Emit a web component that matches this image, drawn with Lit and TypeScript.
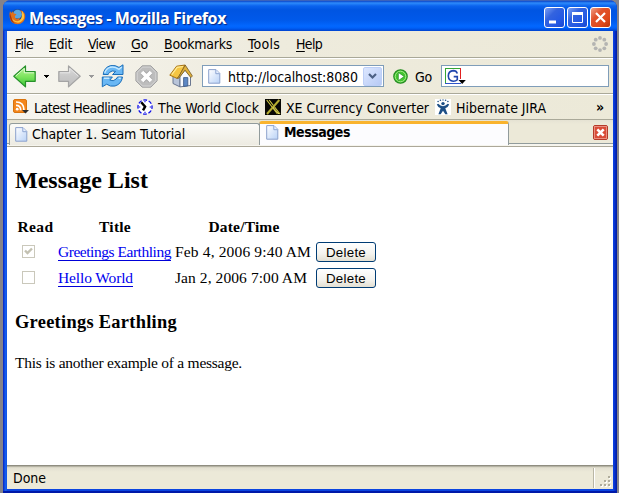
import { LitElement, html, css, svg } from "lit";
import { customElement, property } from "lit/decorators.js";

/** A run of text that is tracked to occupy a given width. */
@customElement("ui-label")
class UiLabel extends LitElement {
  @property() text = "";
  @property({ type: Number }) w = 0;
  @property({ type: Boolean }) mnemonic = false;
  static styles = css`
    :host { display: block; white-space: pre; flex: none; }
    .run { display: inline-block; }
    .key { text-decoration: underline; text-underline-offset: 2px; text-decoration-thickness: 1px; text-decoration-skip-ink: none; }
  `;
  updated() {
    const run = this.renderRoot.querySelector(".run") as HTMLElement;
    run.style.letterSpacing = "0px";
    const natural = run.getBoundingClientRect().width;
    run.style.letterSpacing = (this.w - natural) / this.text.length + "px";
  }
  render() {
    return this.mnemonic
      ? html`<span class="run"><span class="key">${this.text[0]}</span>${this.text.slice(1)}</span>`
      : html`<span class="run">${this.text}</span>`;
  }
}

const label = (text: string, w: number) => html`<ui-label .text=${text} .w=${w}></ui-label>`;

const firefox = html`<svg width="17" height="17" viewBox="0 0 17 17">
  <circle cx="8.5" cy="8.3" r="7.2" fill="#1c4c9c"/><circle cx="8.5" cy="6.2" r="4.4" fill="#5aa6e0"/>
  <path d="M1 3 2.2 5 4 3.2 4.5 5.3 7.5 6.2 6 8 5.8 9.6 8 11 11 9.7 10 12 Q14 11 12.7 5 L11.2 2 Q17 4 16.2 9.5 15 16 8.5 16.3 2 16 .8 10 0 6 1 3Z" fill="#e0701a"/>
  <path d="M13 3Q16 6 14.7 11 12 15 8 14.6 4 14 3 10 4.7 13 8.5 13.2 14 12.5 13 3Z" fill="#ffc43c"/>
  <path d="M1 5Q-.5 13 6 15.6 3 13 2.2 9Z" fill="#a8360f"/></svg>`;

const arrow = (dir: "back" | "fwd") => {
  const on = dir === "back";
  const flip = on ? "" : "translate(23 0) scale(-1 1)";
  return html`<svg width="23" height="23" viewBox="0 0 23 23">
    <defs><linearGradient id=${"shade-" + dir} x2="0" y2="1"><stop stop-color=${on ? "#b9f29b" : "#dcdcdc"}/><stop offset=".5" stop-color=${on ? "#7fe55f" : "#c9c9c9"}/><stop offset="1" stop-color=${on ? "#38c435" : "#bebebe"}/></linearGradient></defs>
    <path transform=${flip} d="M.8 11.3 12.5 1v5.6h9.7v9.7h-9.7v5.6Z" fill=${`url(#shade-${dir})`} stroke=${on ? "#26912a" : "#a4a4a4"} stroke-width="1.2" stroke-linejoin="round"/>
    <path transform=${flip} d="M2.7 11 11.3 3.4v4.4H21" fill="none" stroke=${on ? "#dcfbcc" : "#e8e8e8"} stroke-width="1"/></svg>`;
};
const tri = (c: string) => html`<svg width="5" height="3" viewBox="0 0 5 3" shape-rendering="crispEdges"><path d="M0 0h5v1h-1v1h-1v1h-1v-1h-1v-1h-1z" fill=${c}/></svg>`;

const reload = html`<svg width="24" height="24" viewBox="0 0 24 24">
  <g fill="#69b7f4" stroke="#1c6fb9" stroke-linejoin="round">
  <path d="M2.2 10.5Q3 3.5 9.5 1.6 14.5 .8 18 3.4L22 .8V10.5H11.5L14.6 7.4Q11 6 8.5 8.4 7.4 9.4 7.2 10.5Z"/>
  <path d="M21.5 13Q20.5 20 14 22 9 23 5.7 20.2L1.3 22.8V13H11.4L8.8 16.1Q12.5 17.8 15 15.1 16.2 14 16.5 13Z"/></g>
  <path d="M3.8 9Q5 4.5 9.7 3.2 14 2.4 18 5.4L20.8 3M3 14.3H8.3M17.5 14.3H19.8" fill="none" stroke="#c4e8ff" stroke-width="1.4"/></svg>`;

const stop = html`<svg width="23" height="23" viewBox="0 0 23 23"><path d="M7.2.8h8.6l6.3 6.3v8.8l-6.3 6.3H7.2L.9 15.9V7.1Z" fill="#bdbdbd" stroke="#a2a2a2"/><path d="M7.6 2.1h7.8l5.4 5.4v8L15.4 21H7.6l-5.4-5.5v-8Z" fill="none" stroke="#d4d4d4"/><path d="m7.2 7.2 8.6 8.6m0-8.6-8.6 8.6" stroke="#a9a9a9" stroke-width="5.4"/><path d="m7 7 9 9m0-9-9 9" stroke="#fff" stroke-width="3.7"/></svg>`;

const home = html`<svg width="24" height="24" viewBox="0 0 24 24">
  <path d="M4 11v8.5l7 3.4V11Z" fill="#b9c5d9" stroke="#6b7891"/>
  <path d="M11 12.5 16 6l5.5 6.5v9L11 22.9Z" fill="#f7f9fd" stroke="#6b7891"/>
  <path d="M14.6 13.6h4.2v8.3l-4.2.5Z" fill="#5d88c4" stroke="#375684" stroke-width=".8"/>
  <path d="M.8 11.2 7.6 2.2 16.2 1 10 12.2 8.2 14.4Z" fill="#f5c542" stroke="#a87516" stroke-linejoin="round"/>
  <path d="M2.8 10.6 8.2 3.4 14 2.5" stroke="#ffea94" fill="none" stroke-width="1.2"/>
  <path d="M16.2 1 23.4 12l-1.6 1.6L16 6.2l-6.2 8-1.6.2 1.8-2.2Z" fill="#dfb03a" stroke="#755b28" stroke-width=".8" stroke-linejoin="round"/></svg>`;

const page = html`<svg width="13" height="15" viewBox="0 0 13 15"><defs><linearGradient id="p" x2="1" y2="1"><stop stop-color="#fff"/><stop offset="1" stop-color="#b9d2f7"/></linearGradient></defs>
  <path d="M.7.6H8l3.8 3.8v9.8H.7Z" fill="url(#p)" stroke="#8ba1cc"/><path d="M7.8.8v3.9h3.9" fill="#e7f0ff" stroke="#8da5d2"/></svg>`;

const go = html`<svg width="15" height="15" viewBox="0 0 15 15"><circle cx="7.5" cy="7.5" r="6.7" fill="#43c52f" stroke="#258d22" stroke-width="1.2"/><circle cx="7.5" cy="7.5" r="5.3" fill="none" stroke="#a5ec8a"/><path d="M5.3 3.4 11.2 7.5l-5.9 4.2Z" fill="#fff" stroke="#1d8b1e" stroke-width=".7"/></svg>`;

const rss = html`<svg width="16" height="16" viewBox="0 0 16 16"><rect x=".5" y=".5" width="13" height="13" rx="1.5" fill="#f4861c" stroke="#d8740f"/><g fill="none" stroke="#fff" stroke-width="1.7"><path d="M3 3q8 0 8 8.3M3 6.4q4.7 0 4.7 4.9"/></g><circle cx="4.2" cy="10.2" r="1.4" fill="#fff"/><path d="M9 11h7l-3.5 3.6z" fill="#2b2b2b"/></svg>`;

const clock = html`<svg width="16" height="16" viewBox="0 0 17 17"><circle cx="8.5" cy="8.5" r="7.5" fill="#fff" stroke="#1010e8" stroke-width="1.4" stroke-dasharray="4 1.89" stroke-dashoffset="2"/><g stroke="#1010e8" stroke-width="1.2"><path d="M8.5 2v1.5M8.5 13.5v1.5M2 8.5h1.5M13.5 8.5h1.5"/></g><path d="M4.5 3.5 8.6 8.2 6.4 12" fill="none" stroke="#000" stroke-width="2.6"/></svg>`;

const xe = html`<svg width="16" height="16" viewBox="0 0 16 16"><rect width="16" height="16" fill="#080805"/><path d="M1.7 1 12.5 15M4.2 1 15 15" stroke="#d6cd42" stroke-width="1.1"/><path d="M14.3 1 2 15" stroke="#b6ad30" stroke-width="2"/><path d="m8 8.3 6 6.7" stroke="#f1ea6c"/></svg>`;

const jira = html`<svg width="16" height="16" viewBox="0 0 16 16"><rect width="16" height="16" fill="#fff"/><g fill="#1d4f86"><circle cx="8" cy="4.6" r="1.7"/><path d="M1.8 5.4 3.2 4.8Q5.5 7.2 8 7.2t4.8-2.4l1.4.6q-1 2.7-3.9 3.9l2.3 5.9h-2.3L8 11.8 5.7 15.2H3.4l2.3-5.9Q2.8 8.1 1.8 5.4Z"/><circle cx="3.1" cy="2.5" r=".8"/><circle cx="5.4" cy="1.2" r=".8"/><circle cx="8" cy=".9" r=".7"/><circle cx="10.6" cy="1.2" r=".8"/><circle cx="12.9" cy="2.5" r=".8"/></g></svg>`;

const throbber = html`<svg width="16" height="16" viewBox="0 0 16 16"><g fill="#b4b4b2">${[0, 45, 90, 135, 180, 225, 270, 315].map(
  (a) => svg`<circle cx=${8 + 6.1 * Math.cos((a * Math.PI) / 180)} cy=${8 + 6.1 * Math.sin((a * Math.PI) / 180)} r="1.9"/>`
)}</g></svg>`;

const search = html`<svg width="21" height="17" viewBox="0 0 21 17"><rect x=".5" y=".5" width="15" height="15" fill="#fff"/><path d="M0 .5h15" stroke="#35a635"/><path d="M.5 0v16" stroke="#35a635"/><path d="M0 15.5h16" stroke="#2e55c8"/><path d="M15.5 0v11" stroke="#e02020"/><path d="M12.3 5.4Q11.4 2.6 8.3 2.6 3.4 2.9 3.3 8q.3 5 5 5.2 2.5 0 4-1.5V8.6H8.7" fill="none" stroke="#2146ad" stroke-width="1.6"/><path d="M13.5 12h7.3l-3.6 4z" fill="#000"/></svg>`;

@customElement("app-root")
class AppRoot extends LitElement {
  static styles = css`
    :host { display: block; width: 619px; height: 493px; background: #85838a; overflow: hidden; font: 14px/18px "DejaVu Sans Condensed", "Noto Sans", sans-serif; color: #000; }
    * { box-sizing: border-box; }
    svg { display: block; flex: none; }
    .window { margin-left: 3px; width: 614px; height: 493px; padding: 0 4px 4px; display: flex; flex-direction: column; border-radius: 8px 8px 0 0;
      background: linear-gradient(90deg, #0a1fb5 0, #0a3fdc 1px, #1765f0 3px, #0b45e0 4px, #0b45e0 calc(100% - 4px), #0838dc calc(100% - 3px), #001a9e 100%); box-shadow: inset 0 -2px #0019a8; }
    .title { height: 31px; flex: none; margin: 0 -4px; padding: 3px 6px 0 6px; display: flex; align-items: center; border-radius: 8px 8px 0 0;
      background: linear-gradient(#6b7fae 0, #0a45c8 1px, #2d8bfb 3px, #0b63ee 6px, #0055e2 10px, #0059ea 20px, #0267ff 26px, #0061f8 28px, #0042cf 31px); }
    .title svg { margin-top: -1px; }
    .title ui-label { font: bold 16px/20px "Trebuchet MS", "Open Sans", sans-serif; color: #fff; text-shadow: 1px 1px 1px #0a2783; margin: 2px 0 0 3px; }
    .controls { margin-left: auto; display: flex; gap: 2px; padding-top: 1px; }
    .controls svg { margin: 0; }
    .ctl { width: 21px; height: 21px; border: 1px solid #fff; border-radius: 3px; background: linear-gradient(135deg, #7ba0f4, #3363df 35%, #2459e4 70%, #1b49cf); }
    .ctl.close { background: linear-gradient(135deg, #f0a088, #e0532c 35%, #e0491c 70%, #b93409); }
    .menu { height: 26px; flex: none; background: linear-gradient(90deg, #f6f5ef, #eeebdd 45%, #ece9d8); display: flex; gap: 16px; align-items: center; padding: 0 5px 0 8px; }
    .menu svg { margin-left: auto; }
    .bar { height: 36px; flex: none; border-top: 1px solid #a9a898; box-shadow: inset 0 1px #fff; background: linear-gradient(90deg, #f6f5ef, #eeebdd 45%, #ece9d8); display: flex; align-items: center; padding: 1px 4px 0 6px; }
    .bar > ui-label { padding-top: 1px; }
    .back { margin-right: 8px; } .fwd { margin: 0 8px 0 9px; }
    .field { height: 22px; background: #fff; border: 1px solid #7f9db9; display: flex; align-items: center; }
    .url { width: 182px; margin-left: 9px; padding: 0 1px 0 5px; }
    .url ui-label { width: 155px; padding: 1px 0 0 7px; margin-right: -13px; }
    .pick { width: 19px; height: 19px; margin-left: auto; border-radius: 2px; background: linear-gradient(135deg, #dce7ff, #b7caf5); display: grid; place-items: center; border: 1px solid #bdcff7; }
    .search { flex: 1; padding: 1px 0 0 3px; margin-left: 9px; }
    .marks { height: 26px; flex: none; border-top: 1px solid #aaa999; box-shadow: inset 0 1px #fff; background: linear-gradient(90deg, #f6f5ef, #eeebdd 45%, #ece9d8); display: flex; align-items: center; padding: 1px 8px 0 6px; }
    .marks ui-label { margin: 1px 6px 0 5px; }
    .marks .more { margin: 0 0 0 auto; font-weight: bold; }
    .tabs { height: 28px; flex: none; border-top: 1px solid #aaa999; background: linear-gradient(#e5e2d3, #ece9d8 4px); border-bottom: 1px solid #aca899; box-shadow: inset 0 -2px #f6f5ee, inset 0 -3px #919b9c; display: flex; align-items: flex-start; padding: 0 5px 0 2px; }
    .tab { width: 251px; height: 22px; margin-top: 3px; border: 1px solid #919b9c; border-width: 1px 1px 0; border-radius: 3px 3px 0 0; background: linear-gradient(#fbfbf8, #edebe2); display: flex; align-items: center; padding: 0 0 1px 5px; }
    .tab ui-label { margin-left: 4px; }
    .tab.on { width: 250px; height: 24px; margin: 1px 0 0 -1px; background: #fcfcfe; border-top: 3px solid #fdb933; border-top-color: #f9b32d; padding-bottom: 4px; padding-left: 6px; font-weight: bold; }
    .tab.on ui-label { margin-left: 5px; margin-top: -1px; }
    .tabclose { margin: 5px 0 0 auto; }
    .doc { flex: 1; background: #fff; padding: 15px 8px 0; font: 15.5px/20px "Liberation Serif", serif; }
    h2, h3, p { margin: 0; font-size: inherit; }
    h2 { font: bold 24px/36px "Liberation Serif", serif; height: 54px; }
    .grid { display: grid; grid-template-columns: 39px 114px 138px 60px; column-gap: 3px; margin-left: 1px; grid-template-rows: 23px 26px 26px; align-items: center; justify-items: start; }
    .head { font-weight: bold; justify-self: center; margin-top: -1px; }
    .check { width: 13px; height: 13px; border: 1px solid #cac8bb; margin: -1px 0 0 6px; }
    .link { color: #0000ee; box-shadow: 0 -1px #0000d8 inset; height: 18px; line-height: 18px; }
    .del { width: 60px; height: 20px; padding: 0; border: 1px solid #003c74; border-radius: 3px; background: linear-gradient(#fff, #f4f3ee 60%, #e3dfd2); font: 13.3px/19px "Liberation Sans", sans-serif; color: #000; display: flex; justify-content: center; }
    h3 { font: bold 18.4px/24px "Liberation Serif", serif; margin-top: 19px; height: 43px; }
    .status { height: 24px; flex: none; border-top: 1px solid #8f8d80; box-shadow: inset 0 1px #b5b3a4, inset 0 2px #dad7c7; background: linear-gradient(#dedbcd, #ece9d8 6px); display: flex; align-items: center; padding: 0 1px 0 6px; }
    .sep { margin-left: auto; width: 2px; height: 20px; border-left: 1px solid #b9b6a5; background: #fff; }
    .grip { margin: 9px 0 0 5px; }
  `;
  render() {
    const menu: [string, number][] = [["File", 18], ["Edit", 23], ["View", 27], ["Go", 17], ["Bookmarks", 68], ["Tools", 32], ["Help", 26]];
    const rows = [
      { title: "Greetings Earthling", tw: 113, date: "Feb 4, 2006 9:40 AM", dw: 136, read: true },
      { title: "Hello World", tw: 75, date: "Jan 2, 2006 7:00 AM", dw: 132, read: false },
    ];
    return html`<div class="window">
      <div class="title">${firefox}${label("Messages - Mozilla Firefox", 197)}
        <div class="controls">
          <div class="ctl"><svg width="19" height="19"><path d="M4 14h7" stroke="#fff" stroke-width="3"/></svg></div>
          <div class="ctl"><svg width="19" height="19"><path d="M4 5.5h11" stroke="#fff" stroke-width="3"/><path d="M4.5 5v9.5h10V5" fill="none" stroke="#fff"/></svg></div>
          <div class="ctl close"><svg width="19" height="19"><path d="m5 5 9 9m0-9-9 9" stroke="#fff" stroke-width="2.2"/></svg></div>
        </div>
      </div>
      <div class="menu">${menu.map(([t, w]) => html`<ui-label mnemonic .text=${t} .w=${w}></ui-label>`)}${throbber}</div>
      <div class="bar">
        <div class="back">${arrow("back")}</div>${tri("#000")}
        <div class="fwd">${arrow("fwd")}</div>${tri("#999")}
        <svg width="7" height="1"></svg>${reload}<svg width="10" height="1"></svg>${stop}<svg width="11" height="1"></svg>${home}
        <div class="field url">${page}${label("http://localhost:8080", 130)}
          <div class="pick"><svg width="9" height="7" viewBox="0 0 9 7"><path d="m1 1 3.5 3.5L8 1" fill="none" stroke="#4d6185" stroke-width="2.2"/></svg></div></div>
        <svg width="9" height="1"></svg>${go}<svg width="7" height="1"></svg>${label("Go", 17)}
        <div class="field search">${search}</div>
      </div>
      <div class="marks">${rss}${label("Latest Headlines", 97)}${clock}${label("The World Clock", 101)}${xe}${label("XE Currency Converter", 143)}${jira}${label("Hibernate JIRA", 90)}<ui-label class="more" .text=${"»"} .w=${9}></ui-label></div>
      <div class="tabs">
        <div class="tab">${page}${label("Chapter 1. Seam Tutorial", 153)}</div>
        <div class="tab on">${page}${label("Messages", 66)}</div>
        <div class="tabclose"><svg width="15" height="15" viewBox="0 0 15 15"><rect x=".5" y=".5" width="14" height="14" rx="1.5" fill="#d94c37" stroke="#b43a29"/><rect x="1.5" y="1.5" width="12" height="12" fill="none" stroke="#ea8f80"/><path d="m4.3 4.3 6.4 6.4m0-6.4-6.4 6.4" stroke="#fff" stroke-width="2.6"/></svg></div>
      </div>
      <div class="doc">
        <h2>${label("Message List", 133)}</h2>
        <div class="grid">
          <div class="head">${label("Read", 36)}</div><div class="head">${label("Title", 32)}</div><div class="head">${label("Date/Time", 71)}</div><div></div>
          ${rows.map((r) => html`
            <div class="check">${r.read ? html`<svg width="11" height="11" viewBox="0 0 11 11"><path d="M2 4.5 4.5 7 9 2.5" fill="none" stroke="#c3c1b2" stroke-width="2.4"/></svg>` : ""}</div>
            <div class="link">${label(r.title, r.tw)}</div>
            ${label(r.date, r.dw)}
            <button class="del">${label("Delete", 40)}</button>`)}
        </div>
        <h3>${label("Greetings Earthling", 162)}</h3>
        <p>${label("This is another example of a message.", 227)}</p>
      </div>
      <div class="status">${label("Done", 33)}<div class="sep"></div>
        <svg class="grip" width="12" height="12" viewBox="0 0 12 12" shape-rendering="crispEdges">${[[8, 0], [4, 4], [8, 4], [0, 8], [4, 8], [8, 8]].map(([x, y]) => svg`<rect x=${x + 1} y=${y + 1} width="2" height="2" fill="#fff"/><rect x=${x} y=${y} width="2" height="2" fill="#b0ad9c"/>`)}</svg></div>
    </div>`;
  }
}
